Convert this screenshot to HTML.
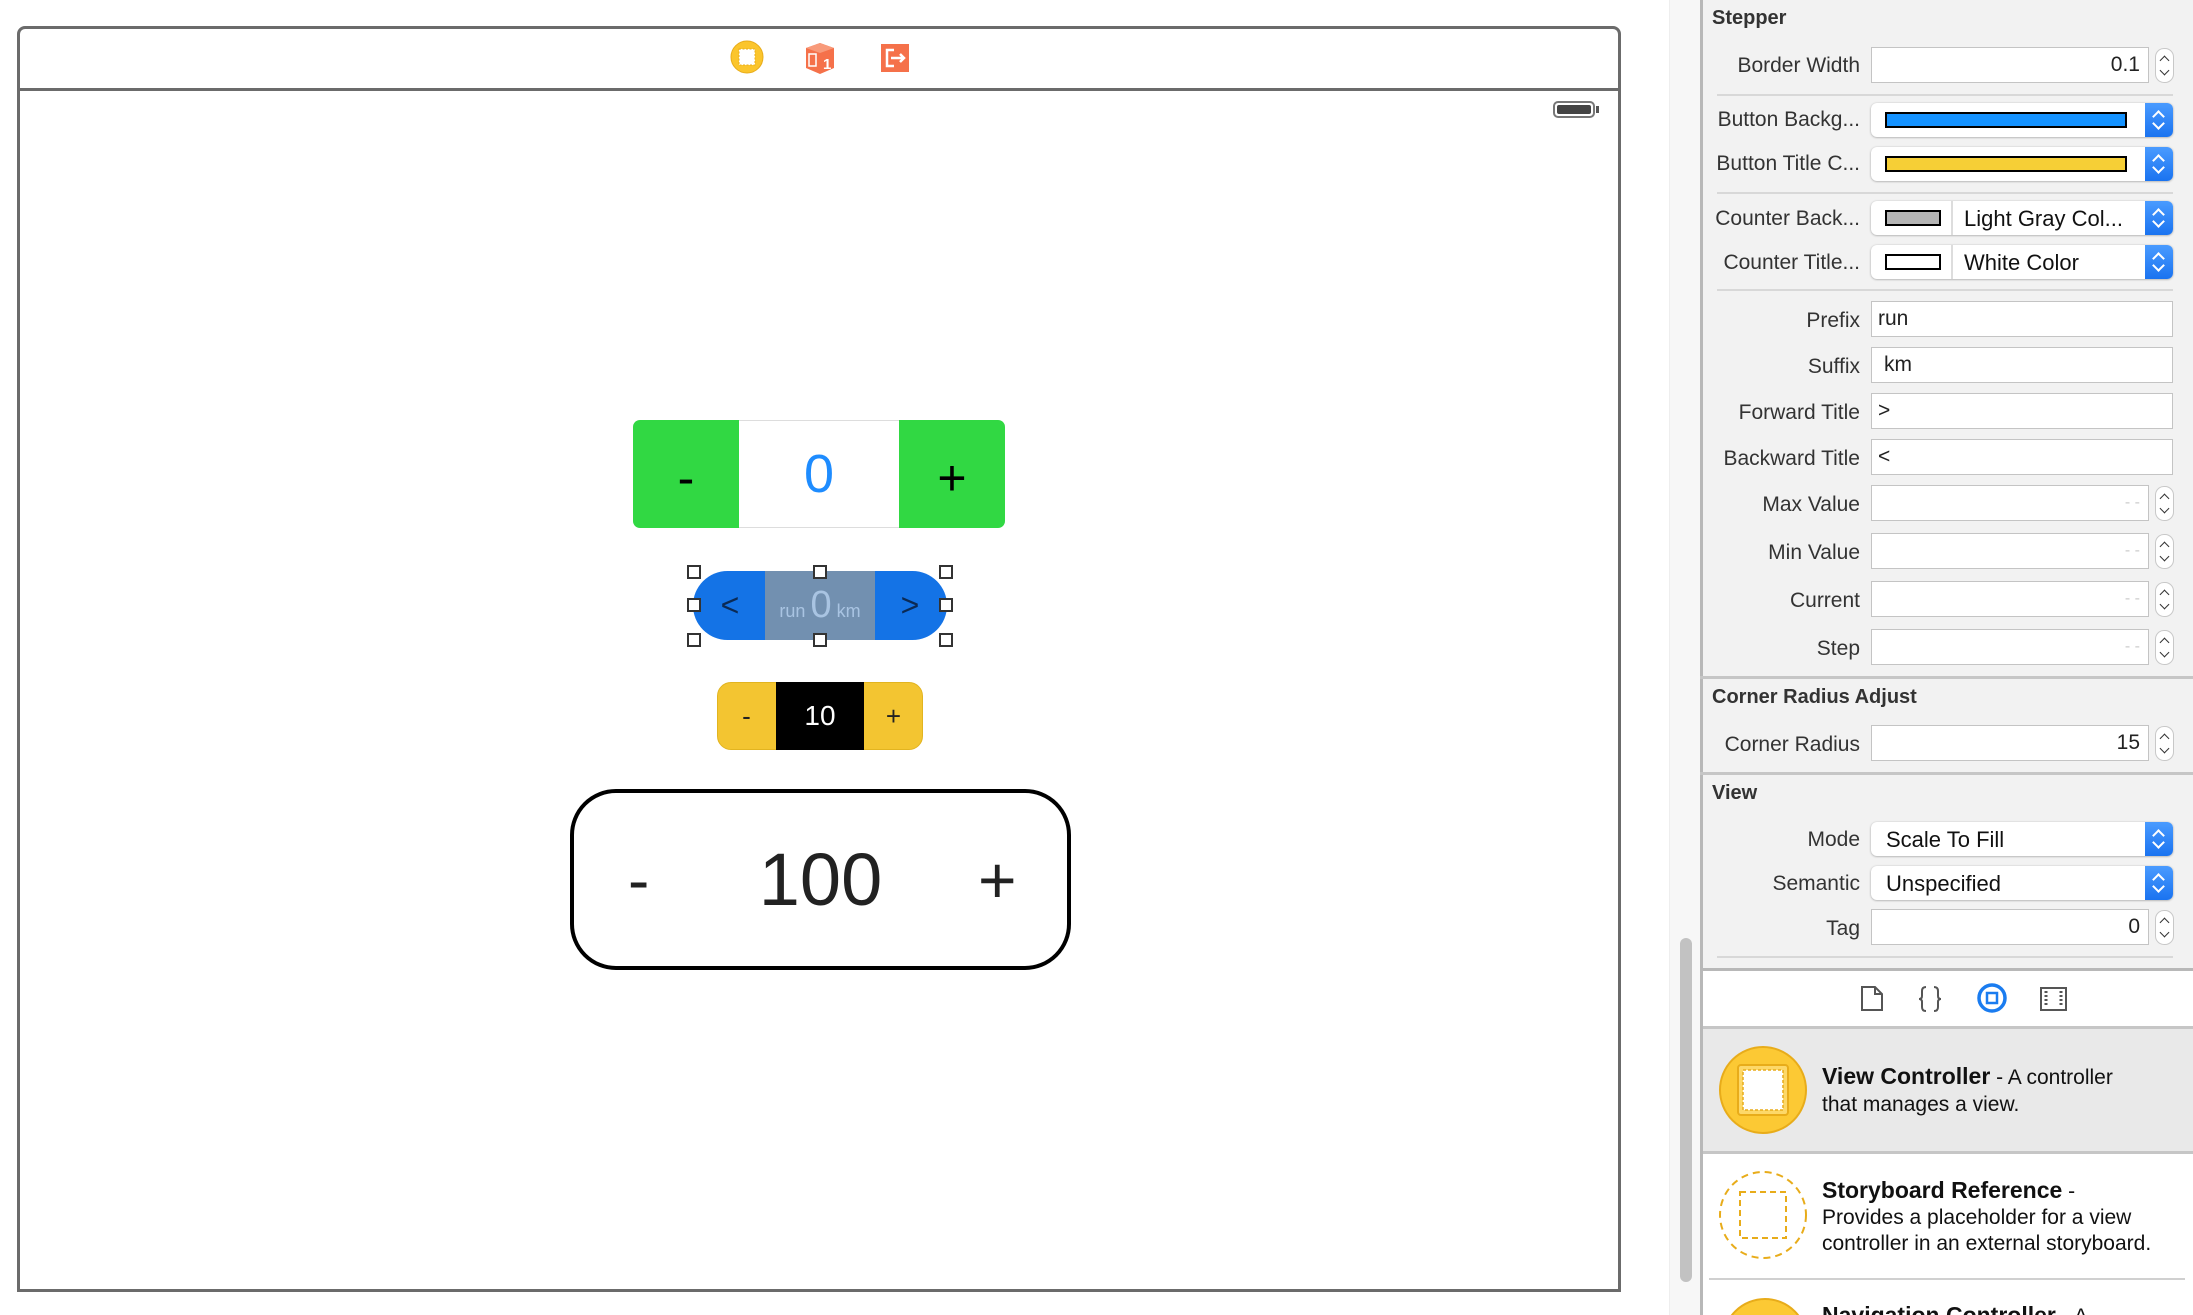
<!DOCTYPE html>
<html style="width:2193px;height:1315px;overflow:hidden"><head><meta charset="utf-8"><style>
*{margin:0;padding:0;box-sizing:border-box}
body{width:2193px;height:1315px;position:relative;overflow:hidden;background:#fff;font-family:"Liberation Sans",sans-serif;color:#222}
.a{position:absolute}
.lbl{position:absolute;right:333px;font-size:21px;color:#333;text-align:right;white-space:nowrap}
.fld{position:absolute;left:1871px;background:#fff;border:1.5px solid #c4c4c4;font-size:21px;color:#222}
.stp{position:absolute;left:2155px;width:19px;border:1px solid #c8c8c8;border-radius:9px;background:#fff}
.stp::before{content:"";position:absolute;left:5px;top:8px;width:6px;height:6px;border-left:1.5px solid #333;border-top:1.5px solid #333;transform:rotate(45deg)}
.stp::after{content:"";position:absolute;left:5px;bottom:8px;width:6px;height:6px;border-right:1.5px solid #333;border-bottom:1.5px solid #333;transform:rotate(45deg)}
.pop{position:absolute;left:1871px;width:302px;height:34px;background:#fff;border-radius:6px;box-shadow:0 0.5px 2px rgba(0,0,0,.35);font-size:22px;color:#111}
.pop .b{position:absolute;right:0;top:0;width:28px;height:34px;background:linear-gradient(#4a9bff,#1a73f0);border-radius:0 6px 6px 0}
.pop .b::before{content:"";position:absolute;left:9px;top:9px;width:7px;height:7px;border-left:2px solid #fff;border-top:2px solid #fff;transform:rotate(45deg)}
.pop .b::after{content:"";position:absolute;left:9px;bottom:9px;width:7px;height:7px;border-right:2px solid #fff;border-bottom:2px solid #fff;transform:rotate(45deg)}
.sep{position:absolute;left:1717px;width:456px;height:2px;background:#d8d8d8}
.hsep{position:absolute;left:1700px;width:493px;height:3px;background:#c6c6c6}
.hd{position:absolute;left:1712px;font-size:20px;font-weight:bold;color:#333}
</style></head><body>
<!-- canvas -->
<div class="a" style="left:17px;top:26px;width:1604px;height:1266px;border:3px solid #6b6b6b;border-radius:8px 8px 0 0"></div>
<div class="a" style="left:17px;top:88px;width:1604px;height:3px;background:#6b6b6b"></div>
<svg class="a" style="left:728px;top:40px" width="190" height="36" viewBox="0 0 190 36">
<circle cx="19" cy="17" r="16" fill="#fbc52c" stroke="#e8ac1a"/>
<rect x="11" y="9" width="16" height="16" fill="#fff" stroke="#e8ac1a" stroke-dasharray="2 1.5"/>
<polygon points="78,8 92,3 106,8 106,28 92,34 78,28" fill="#f5714a"/>
<polygon points="78,8 92,3 106,8 92,13" fill="#f89a7a"/>
<rect x="81" y="14" width="7" height="12" fill="none" stroke="#fff" stroke-width="1.5"/>
<text x="95" y="29" font-size="15" font-weight="bold" fill="#fff" font-family="Liberation Sans">1</text>
<rect x="153" y="4" width="28" height="28" fill="#f5714a"/>
<path d="M166 10 H159 V26 H166 M163 18 H176 M172 14 L176 18 L172 22" fill="none" stroke="#fff" stroke-width="2.5"/>
</svg>
<div class="a" style="left:1553px;top:101px;width:42px;height:17px;border:2px solid #777;border-radius:5px;padding:2px"><div style="width:100%;height:100%;background:#444;border-radius:2px"></div></div>
<div class="a" style="left:1596px;top:106px;width:3px;height:7px;background:#555"></div>

<!-- green stepper -->
<div class="a" style="left:633px;top:420px;width:372px;height:108px;background:#31d843;border-radius:7px"></div>
<div class="a" style="left:739px;top:420px;width:160px;height:108px;background:#fff;border-top:1px solid #ddd;border-bottom:1px solid #ddd"></div>
<div class="a" style="left:739px;top:420px;width:160px;height:108px;text-align:center;font-size:54px;line-height:108px;color:#1e8cff">0</div>
<div class="a" style="left:633px;top:424px;width:106px;height:108px;text-align:center;font-size:50px;line-height:108px;color:#000">-</div>
<div class="a" style="left:899px;top:424px;width:106px;height:108px;text-align:center;font-size:50px;line-height:108px;color:#000">+</div>

<!-- blue stepper -->
<div class="a" style="left:693px;top:571px;width:254px;height:69px;background:#1473e6;border-radius:35px"></div>
<div class="a" style="left:765px;top:571px;width:110px;height:69px;background:#7290b0;text-align:center;line-height:69px;color:#a9c4e2"><span style="font-size:18px">run </span><span style="font-size:38px">0</span><span style="font-size:18px"> km</span></div>
<div class="a" style="left:700px;top:571px;width:60px;height:69px;text-align:center;font-size:32px;line-height:69px;color:#0b2a55">&lt;</div>
<div class="a" style="left:880px;top:571px;width:60px;height:69px;text-align:center;font-size:32px;line-height:69px;color:#0b2a55">&gt;</div>
<svg class="a" style="left:686px;top:564px" width="270" height="84" viewBox="0 0 270 84">
<g fill="#fff" stroke="#333" stroke-width="2"><rect x="2" y="2" width="12" height="12"/><rect x="128" y="2" width="12" height="12"/><rect x="254" y="2" width="12" height="12"/><rect x="2" y="35" width="12" height="12"/><rect x="254" y="35" width="12" height="12"/><rect x="2" y="70" width="12" height="12"/><rect x="128" y="70" width="12" height="12"/><rect x="254" y="70" width="12" height="12"/></g></svg>

<!-- yellow stepper -->
<div class="a" style="left:717px;top:682px;width:206px;height:68px;background:#f3c531;border-radius:14px;border:1px solid #e2b420"></div>
<div class="a" style="left:776px;top:682px;width:88px;height:68px;background:#000;color:#fff;text-align:center;font-size:28px;line-height:68px">10</div>
<div class="a" style="left:717px;top:682px;width:59px;height:68px;text-align:center;font-size:26px;line-height:68px">-</div>
<div class="a" style="left:864px;top:682px;width:59px;height:68px;text-align:center;font-size:26px;line-height:68px">+</div>

<!-- big stepper -->
<div class="a" style="left:570px;top:789px;width:501px;height:181px;border:4px solid #000;border-radius:46px"></div>
<div class="a" style="left:570px;top:789px;width:501px;height:181px;text-align:center;font-size:74px;line-height:181px">100</div>
<div class="a" style="left:628px;top:845px;font-size:64px;line-height:70px">-</div>
<div class="a" style="left:978px;top:845px;font-size:66px;line-height:70px">+</div>

<!-- scroll area -->
<div class="a" style="left:1669px;top:0;width:31px;height:1315px;background:#f7f7f7;border-left:1px solid #eee"></div>
<div class="a" style="left:1680px;top:938px;width:12px;height:344px;background:#c2c2c2;border-radius:6px"></div>

<!-- panel -->
<div class="a" style="left:1700px;top:0;width:493px;height:969px;background:#f2f2f2;border-left:3px solid #b8b8b8"></div>
<div class="hd" style="top:7px">Stepper</div>

<div class="lbl" style="top:54px">Border Width</div>
<div class="fld" style="top:47px;width:278px;height:36px;text-align:right;padding-right:8px;line-height:33px">0.1</div>
<div class="stp" style="top:48px;height:35px"></div>
<div class="sep" style="top:94px"></div>
<div class="lbl" style="top:108px">Button Backg...</div>
<div class="pop" style="top:103px"><div class="a" style="left:14px;top:9px;width:242px;height:16px;background:#1492ff;border:2px solid #000"></div><div class="b"></div></div>
<div class="lbl" style="top:152px">Button Title C...</div>
<div class="pop" style="top:147px"><div class="a" style="left:14px;top:9px;width:242px;height:16px;background:#f6cf36;border:2px solid #000"></div><div class="b"></div></div>
<div class="sep" style="top:192px"></div>
<div class="lbl" style="top:207px">Counter Back...</div>
<div class="pop" style="top:201px"><div class="a" style="left:14px;top:9px;width:56px;height:16px;background:#b5b5b5;border:2px solid #000"></div><div class="a" style="left:80px;top:0;width:2px;height:34px;background:#ddd"></div><div class="a" style="left:93px;top:5px">Light Gray Col...</div><div class="b"></div></div>
<div class="lbl" style="top:251px">Counter Title...</div>
<div class="pop" style="top:245px"><div class="a" style="left:14px;top:9px;width:56px;height:16px;background:#fff;border:2px solid #000"></div><div class="a" style="left:80px;top:0;width:2px;height:34px;background:#ddd"></div><div class="a" style="left:93px;top:5px">White Color</div><div class="b"></div></div>
<div class="sep" style="top:289px"></div>

<div class="lbl" style="top:309px">Prefix</div>
<div class="fld" style="top:301px;width:302px;height:36px;padding-left:6px;line-height:33px">run</div>
<div class="lbl" style="top:355px">Suffix</div>
<div class="fld" style="top:347px;width:302px;height:36px;padding-left:12px;line-height:33px">km</div>
<div class="lbl" style="top:401px">Forward Title</div>
<div class="fld" style="top:393px;width:302px;height:36px;padding-left:6px;line-height:33px">&gt;</div>
<div class="lbl" style="top:447px">Backward Title</div>
<div class="fld" style="top:439px;width:302px;height:36px;padding-left:6px;line-height:33px">&lt;</div>

<div class="lbl" style="top:493px">Max Value</div>
<div class="fld" style="top:485px;width:278px;height:36px;text-align:right;padding-right:8px;line-height:33px;color:#ccc;font-size:16px">- -</div>
<div class="stp" style="top:486px;height:35px"></div>
<div class="lbl" style="top:541px">Min Value</div>
<div class="fld" style="top:533px;width:278px;height:36px;text-align:right;padding-right:8px;line-height:33px;color:#ccc;font-size:16px">- -</div>
<div class="stp" style="top:534px;height:35px"></div>
<div class="lbl" style="top:589px">Current</div>
<div class="fld" style="top:581px;width:278px;height:36px;text-align:right;padding-right:8px;line-height:33px;color:#ccc;font-size:16px">- -</div>
<div class="stp" style="top:582px;height:35px"></div>
<div class="lbl" style="top:637px">Step</div>
<div class="fld" style="top:629px;width:278px;height:36px;text-align:right;padding-right:8px;line-height:33px;color:#ccc;font-size:16px">- -</div>
<div class="stp" style="top:630px;height:35px"></div>

<div class="hsep" style="top:676px"></div>
<div class="hd" style="top:686px">Corner Radius Adjust</div>
<div class="lbl" style="top:733px">Corner Radius</div>
<div class="fld" style="top:725px;width:278px;height:36px;text-align:right;padding-right:8px;line-height:33px">15</div>
<div class="stp" style="top:726px;height:35px"></div>
<div class="hsep" style="top:772px"></div>
<div class="hd" style="top:782px">View</div>
<div class="lbl" style="top:828px">Mode</div>
<div class="pop" style="top:822px"><div class="a" style="left:15px;top:5px">Scale To Fill</div><div class="b"></div></div>
<div class="lbl" style="top:872px">Semantic</div>
<div class="pop" style="top:866px"><div class="a" style="left:15px;top:5px">Unspecified</div><div class="b"></div></div>
<div class="lbl" style="top:917px">Tag</div>
<div class="fld" style="top:909px;width:278px;height:36px;text-align:right;padding-right:8px;line-height:33px">0</div>
<div class="stp" style="top:910px;height:35px"></div>
<div class="sep" style="top:956px"></div>

<!-- bottom library -->
<div class="a" style="left:1700px;top:968px;width:493px;height:347px;background:#fff;border-left:3px solid #b8b8b8;border-top:3px solid #b8b8b8;overflow:hidden">
<svg class="a" style="left:150px;top:9px" width="220" height="40" viewBox="0 0 220 40">
<path d="M9 7 H22 L29 14 V30 H9 Z M22 7 V14 H29" fill="none" stroke="#555" stroke-width="2"/>
<path d="M73 7 Q69 7 69 11 V16 Q69 19 66 19 Q69 19 69 22 V27 Q69 31 73 31 M81 7 Q85 7 85 11 V16 Q85 19 88 19 Q85 19 85 22 V27 Q85 31 81 31" fill="none" stroke="#555" stroke-width="2"/>
<circle cx="139" cy="18" r="13" fill="none" stroke="#1a7cf0" stroke-width="3.5"/>
<rect x="134" y="13" width="10" height="10" fill="none" stroke="#1a7cf0" stroke-width="2.5"/>
<rect x="188" y="8" width="25" height="22" fill="none" stroke="#555" stroke-width="2"/>
<path d="M193 11 V27 M208 11 V27" stroke="#555" stroke-width="3" stroke-dasharray="2 2"/>
</svg>
<div class="a" style="left:0;top:55px;width:490px;height:3px;background:#c6c6c6"></div>
<div class="a" style="left:0;top:58px;width:490px;height:122px;background:#e9e9e9"></div>
<div class="a" style="left:0;top:180px;width:490px;height:3px;background:#c6c6c6"></div>
<svg class="a" style="left:15px;top:74px" width="92" height="92" viewBox="0 0 92 92">
<circle cx="45" cy="45" r="43" fill="#fcc934" stroke="#e8ac1a" stroke-width="2"/>
<rect x="20" y="20" width="50" height="50" rx="3" fill="#fdd868" stroke="#e8ac1a" stroke-width="2"/>
<rect x="25" y="25" width="40" height="40" fill="#fff" stroke="#e8ac1a" stroke-width="1.5" stroke-dasharray="3 2"/>
</svg>
<div class="a" style="left:119px;top:92px;font-size:21px;line-height:27px;color:#111;white-space:nowrap"><b style="font-size:23px">View Controller</b> - A controller<br>that manages a view.</div>
<svg class="a" style="left:15px;top:199px" width="92" height="92" viewBox="0 0 92 92">
<circle cx="45" cy="45" r="43" fill="none" stroke="#e8ac1a" stroke-width="2" stroke-dasharray="7 5"/>
<rect x="22" y="22" width="46" height="46" fill="none" stroke="#e8ac1a" stroke-width="2" stroke-dasharray="6 4"/>
</svg>
<div class="a" style="left:119px;top:206px;font-size:21px;line-height:26px;color:#111;white-space:nowrap"><b style="font-size:23px">Storyboard Reference</b> -<br>Provides a placeholder for a view<br>controller in an external storyboard.</div>
<div class="a" style="left:6px;top:307px;width:476px;height:2px;background:#d0d0d0"></div>
<div class="a" style="left:19px;top:327px;width:86px;height:86px;border-radius:50%;background:#fcc934;border:2px solid #e8ac1a"></div>
<div class="a" style="left:119px;top:331px;font-size:23px;font-weight:bold;color:#111;white-space:nowrap">Navigation Controller <span style="font-weight:normal;font-size:21px">- A</span></div>
</div>
</body></html>
